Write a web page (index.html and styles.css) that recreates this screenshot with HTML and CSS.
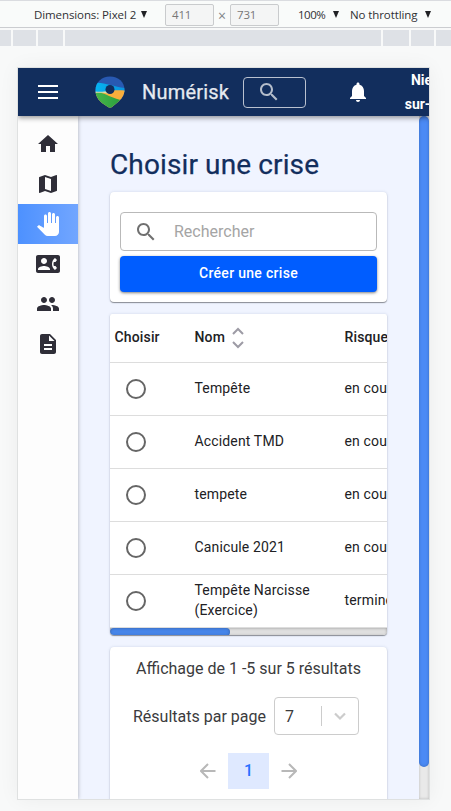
FILE: index.html
```html
<!DOCTYPE html>
<html lang="fr">
<head>
<meta charset="utf-8">
<title>Numérisk</title>
<link rel="stylesheet" href="styles.css">
</head>
<body>
<div class="toolbar">
  <span class="dimensions">Dimensions: Pixel 2</span><i class="caret"></i>
  <span class="size">411</span><span class="times">×</span><span class="size">731</span>
  <span class="zoom">100%</span><i class="caret"></i>
  <span class="throttle">No throttling</span><i class="caret"></i>
</div>
<div class="ruler"><i></i><i></i><i></i><i></i><i></i><i></i><i></i></div>
<div class="device">
  <header class="appbar">
    <svg class="burger" viewBox="0 0 20 14"><path d="M0 1h20M0 7h20M0 13h20" stroke="#fff" stroke-width="2"/></svg>
    <svg class="logo" viewBox="0 0 30 32">
      <defs>
        <clipPath id="pin"><path d="M15 .5C6.500.5.5 6.500.5 14c0 6 3 10 6.500 13l6 4q2 1.200 4 0l6-5c3.500-3 6.500-7 6.500-12C29.500 6 23.500.5 15 .5Z"/></clipPath>
        <linearGradient id="grass"><stop offset="0" stop-color="#47b649"/><stop offset="1" stop-color="#259b3d"/></linearGradient>
        <linearGradient id="sky"><stop offset="0" stop-color="#05b4f2"/><stop offset="1" stop-color="#0a93dd"/></linearGradient>
      </defs>
      <g clip-path="url(#pin)">
        <path d="M0 0h30v32H0z" fill="#2859b2"/>
        <path d="M0 7c9-1 18 4 30 5v4H0z" fill="url(#sky)"/>
        <path d="M0 16.500c8 .5 17-3.500 30-2v18H0z" fill="#f9ae3c"/>
        <path d="M0 17c6-1 10 1 14 3s10 3 16 6v6H0z" fill="url(#grass)"/>
        <path d="M0 15.500c6 .5 9 0 13 0l2 2.500c-5-1-9-1.500-15-1z" fill="#cfe3b0"/>
      </g>
      <circle cx="15" cy="13.500" r="4.500" fill="#122e5d"/>
    </svg>
    <span class="brand">Numérisk</span>
    <div class="appsearch"><svg viewBox="0 0 24 24"><use href="#search"/></svg></div>
    <svg class="bell" viewBox="0 0 24 24"><path d="M12 22c1.100 0 2-.9 2-2h-4c0 1.100.9 2 2 2zm6-6v-5c0-3.070-1.640-5.640-4.500-6.320V4c0-.83-.67-1.500-1.500-1.500s-1.500.67-1.500 1.500v.68C7.630 5.360 6 7.920 6 11v5l-2 2v1h16v-1l-2-2z"/></svg>
    <div class="city">Nieul-<br>sur-Mer</div>
  </header>
  <div class="body">
    <nav class="sidebar">
      <a><svg viewBox="0 0 24 24"><path d="M10 20v-6h4v6h5v-8h3L12 3 2 12h3v8z"/></svg></a>
      <a><svg viewBox="0 0 24 24"><path d="m20.500 3-.16.030L15 5.100 9 3 3.360 4.900c-.21.070-.36.250-.36.480V20.500c0 .28.220.5.500.5l.16-.03L9 18.900l6 2.100 5.640-1.900c.21-.07.360-.25.360-.48V3.500c0-.28-.22-.5-.5-.5zM15 19l-6-2.110V5l6 2.110V19z"/></svg></a>
      <a class="active"><svg viewBox="0 0 24 24"><path d="M23 5.500V20c0 2.200-1.800 4-4 4h-7.300c-1.080 0-2.100-.43-2.850-1.190L1 14.830s1.260-1.230 1.300-1.250c.22-.19.490-.29.790-.29.220 0 .42.060.6.160.04.010 4.310 2.460 4.310 2.460V4c0-.83.67-1.500 1.500-1.500S11 3.170 11 4v7h1V1.500c0-.83.67-1.500 1.500-1.500S15 .67 15 1.500V11h1V2.500c0-.83.67-1.500 1.500-1.500s1.500.67 1.500 1.500V11h1V5.500c0-.83.67-1.500 1.500-1.500s1.500.67 1.500 1.500z"/></svg></a>
      <a><svg viewBox="0 0 24 24"><path fill-rule="evenodd" d="M22 3H2C.9 3 0 3.900 0 5v14c0 1.100.9 2 2 2h20c1.100 0 1.990-.9 1.990-2L24 5c0-1.100-.9-2-2-2zM8 6c1.660 0 3 1.340 3 3s-1.340 3-3 3-3-1.340-3-3 1.340-3 3-3zm6 12H2v-1c0-2 4-3.100 6-3.100s6 1.100 6 3.100v1zm3.850-4h1.640L21 16l-1.990 1.990c-1.310-.98-2.280-2.380-2.730-3.990-.18-.64-.28-1.310-.28-2s.1-1.360.28-2c.45-1.620 1.420-3.010 2.730-3.990L21 8l-1.510 2h-1.640c-.22.630-.35 1.300-.35 2s.13 1.370.35 2z"/></svg></a>
      <a><svg viewBox="0 0 24 24"><path d="M16 11c1.660 0 2.990-1.340 2.990-3S17.660 5 16 5s-3 1.340-3 3 1.340 3 3 3zm-8 0c1.660 0 2.990-1.340 2.990-3S9.660 5 8 5 5 6.340 5 8s1.340 3 3 3zm0 2c-2.330 0-7 1.170-7 3.500V19h14v-2.500c0-2.330-4.670-3.500-7-3.500zm8 0c-.29 0-.62.020-.97.050 1.160.84 1.970 1.970 1.970 3.450V19h6v-2.500c0-2.330-4.670-3.500-7-3.500z"/></svg></a>
      <a><svg viewBox="0 0 24 24"><path fill-rule="evenodd" d="M14 2H6c-1.100 0-1.990.9-1.990 2L4 20c0 1.100.89 2 1.990 2H18c1.100 0 2-.9 2-2V8l-6-6zm2 16H8v-2h8v2zm0-4H8v-2h8v2zm-3-5V3.500L18.500 9H13z"/></svg></a>
    </nav>
    <main>
      <h1>Choisir une crise</h1>
      <section class="card filters">
        <div class="field"><svg viewBox="0 0 24 24"><path id="search" d="M15.500 14h-.79l-.28-.27C15.410 12.590 16 11.110 16 9.500 16 5.910 13.090 3 9.500 3S3 5.910 3 9.500 5.910 16 9.500 16c1.610 0 3.090-.59 4.230-1.570l.27.28v.79l5 4.990L20.490 19l-4.990-5zm-6 0C7.010 14 5 11.990 5 9.500S7.010 5 9.500 5 14 7.010 14 9.500 11.990 14 9.500 14z"/></svg><span>Rechercher</span></div>
        <button>Créer une crise</button>
      </section>
      <section class="card tablecard">
        <div class="row head"><div>Choisir</div><div>Nom <svg class="sort" viewBox="0 0 12 22"><path d="m1 7 5-5 5 5M1 15l5 5 5-5"/></svg></div><div>Risque</div></div>
        <div class="row"><div><i class="radio"></i></div><div>Tempête</div><div>en cours</div></div>
        <div class="row"><div><i class="radio"></i></div><div>Accident TMD</div><div>en cours</div></div>
        <div class="row"><div><i class="radio"></i></div><div>tempete</div><div>en cours</div></div>
        <div class="row"><div><i class="radio"></i></div><div>Canicule 2021</div><div>en cours</div></div>
        <div class="row"><div><i class="radio"></i></div><div>Tempête Narcisse<br>(Exercice)</div><div>terminée</div></div>
        <div class="hscroll"><i></i></div>
      </section>
      <section class="card pager">
        <div class="summary">Affichage de 1 -5 sur 5 résultats</div>
        <div class="perpage"><span>Résultats par page</span><div class="select"><span>7</span><i></i><svg viewBox="0 0 20 20"><path d="m5 7.500 5 5 5-5"/></svg></div></div>
        <div class="pages"><svg viewBox="0 0 16 16"><path d="M15.500 8H1M8 1 1 8l7 7"/></svg><b>1</b><svg viewBox="0 0 16 16"><path d="M.5 8H15M8 1l7 7-7 7"/></svg></div>
      </section>
    </main>
    <div class="vscroll"><i></i></div>
  </div>
</div>
</body>
</html>
```

FILE: styles.css
```css
* { box-sizing: border-box; }
body { margin: 0; width: 451px; height: 811px; overflow: hidden; background: #f8f9f9; font-family: Roboto, sans-serif; color: #212124; }
svg { display: block; flex: none; }

.toolbar { display: flex; align-items: center; height: 28px; padding: 1px 0 0 34px; border-top: 1px solid #dadce0; border-bottom: 1px solid #cbcdd0; background: #f9fbfa; font: 11.5px "Open Sans", sans-serif; color: #303134; white-space: nowrap; }
.toolbar > * { flex: none; }
.dimensions { width: 103px; letter-spacing: -.1px; }
.caret { width: 0; height: 0; margin-left: 4px; border: 3.5px solid transparent; border-top: 7px solid #202124; border-bottom: 0; }
.size { width: 49px; height: 22px; padding-left: 6px; border: 1px solid #c9cbcd; border-radius: 2px; background: #f4f5f5; color: #777; line-height: 20px; letter-spacing: -.2px; }
.caret + .size { margin-left: 18px; }
.times { width: 16px; padding-top: 2px; text-align: center; color: #808488; font-size: 14px; }
.zoom { width: 31px; margin-left: 19px; letter-spacing: -.5px; }
.throttle { width: 71px; margin-left: 11px; letter-spacing: -.1px; }
.ruler { display: grid; grid-template-columns: 11px 23px 25px 316px 26px 23px 17px; gap: 2px; height: 16px; margin-top: 2px; background: #f8f9f9; overflow: hidden; }
.ruler i { background: #dee1e6; }

.device { width: 411px; height: 731px; margin: 22px 0 0 18px; overflow: hidden; background: #f0f4ff; box-shadow: 0 0 0 1px #dfe1e1, 0 0 20px rgba(0,0,0,.06); }
.appbar { position: relative; z-index: 2; display: flex; align-items: center; height: 48px; padding-left: 20px; background: #122e5d; box-shadow: 0 2px 5px rgba(0,0,0,.4); color: #e6eaf0; }
.appbar > * { flex: none; }
.burger { width: 20px; height: 14px; }
.logo { width: 30px; height: 32px; margin-left: 37px; }
.brand { width: 86px; margin-left: 17px; font-size: 20px; font-weight: 400; letter-spacing: .2px; -webkit-text-stroke: .25px #e6eaf0; }
.appsearch { width: 63px; height: 31px; margin-left: 15px; padding: 2px 0 0 13px; border: 1px solid #b9c1cf; border-radius: 4px; }
.appsearch svg { width: 24px; height: 24px; fill: #b4bdcb; }
.bell { width: 24px; height: 24px; margin-left: 40px; fill: #fff; }
.city { width: 80px; margin-left: 20px; text-align: center; font-size: 14px; font-weight: 700; line-height: 24px; color: #fff; padding-bottom: 1px; }
.body { display: flex; height: 683px; }
.sidebar { flex: none; width: 60px; padding-top: 8px; background: #fdfdfd; box-shadow: 0 0 4px rgba(0,0,0,.3); }
.sidebar a { display: flex; align-items: center; justify-content: center; height: 40px; }
.sidebar svg { width: 24px; height: 24px; fill: #2f2e38; }
.sidebar .active { background: linear-gradient(90deg, #4d91ff, #72a6ff); }
.sidebar .active svg { fill: #fff; }
main { flex: none; width: 341px; height: 683px; padding: 33px 32px 0; overflow: hidden; }
h1 { height: 32px; margin: 0 0 11px; color: #122e5d; font-size: 28px; font-weight: 400; line-height: 32px; letter-spacing: .12px; white-space: nowrap; -webkit-text-stroke: .25px #122e5d; }
.card { background: #fff; border-radius: 4px; box-shadow: 0 1px 1px rgba(0,0,0,.4), 0 0 3px rgba(40,60,110,.16); }
.filters { height: 110px; padding: 20px 10px 0; }
.field { display: flex; align-items: center; height: 39px; padding-left: 13px; border: 1px solid #b9b9b9; border-radius: 4px; color: #a5a5a5; font-size: 16px; }
.field svg { width: 24px; height: 24px; margin-right: 16px; fill: #707070; }
button { display: block; width: 257px; height: 36px; margin-top: 5px; padding: 0 0 2px; border: 0; border-radius: 4px; background: #005dff; box-shadow: 0 1px 3px rgba(0,0,0,.5); color: #fff; font: 500 14px Roboto, sans-serif; letter-spacing: .3px; }
.tablecard { height: 321px; margin-top: 12px; overflow: hidden; border-radius: 2px 2px 4px 4px; }
.row { display: grid; grid-template-columns: 80px 150px 90px; align-items: center; height: 53px; border-bottom: 1px solid #ddd; font-size: 14px; line-height: 20px; letter-spacing: .15px; white-space: nowrap; }
.row > div { padding: 0 0 2px 4.5px; }
.row > div:first-child { padding-bottom: 0; }
.row.head { height: 49px; padding-bottom: 2px; font-weight: 500; letter-spacing: .15px; }
.head > div { display: flex; align-items: center; padding-bottom: 0; }
.sort { width: 12px; height: 22px; margin: 2px 0 0 7px; fill: none; stroke: #9d9ba5; stroke-width: 2; }
.radio { display: block; width: 20px; height: 20px; margin-left: 11px; border: 2px solid #666; border-radius: 50%; }
.hscroll { height: 8px; background: #dfdfdf; box-shadow: inset 0 0 3px rgba(0,0,0,.35); }
.hscroll i { display: block; width: 120px; height: 8px; border-radius: 4px; background: #4685e9; box-shadow: inset 0 0 3px rgba(0,0,0,.3); }
.pager { height: 175px; margin-top: 12px; padding-top: 10px; color: #3b3b3d; font-size: 16px; }
.summary { height: 24px; line-height: 24px; text-align: center; }
.perpage { display: flex; align-items: center; height: 38px; margin-top: 16px; padding-left: 23px; white-space: nowrap; }
.perpage > span { width: 141px; }
.select { display: flex; align-items: center; width: 85px; height: 38px; padding-left: 10px; border: 1px solid #ccc; border-radius: 4px; }
.select span { width: 36px; }
.select i { width: 1px; height: 20px; background: #ccc; }
.select svg { width: 20px; height: 20px; margin-left: 8px; fill: none; stroke: #ccc; stroke-width: 2.2; }
.pages { display: flex; align-items: center; height: 36px; margin: 18px 0 0 90px; }
.pages svg { width: 16px; height: 16px; fill: none; stroke: #b8b8b8; stroke-width: 2; }
.pages b { width: 41px; height: 36px; margin: 0 12px; background: #dfe9ff; color: #2870ff; line-height: 36px; text-align: center; font-weight: 500; }
.vscroll { flex: none; width: 10px; background: #e9e9e9; box-shadow: inset 0 0 3px rgba(0,0,0,.2); }
.vscroll i { display: block; height: 651px; border-radius: 5px; background: #4b8af5; box-shadow: inset 0 0 3px rgba(0,0,0,.25); }
```
